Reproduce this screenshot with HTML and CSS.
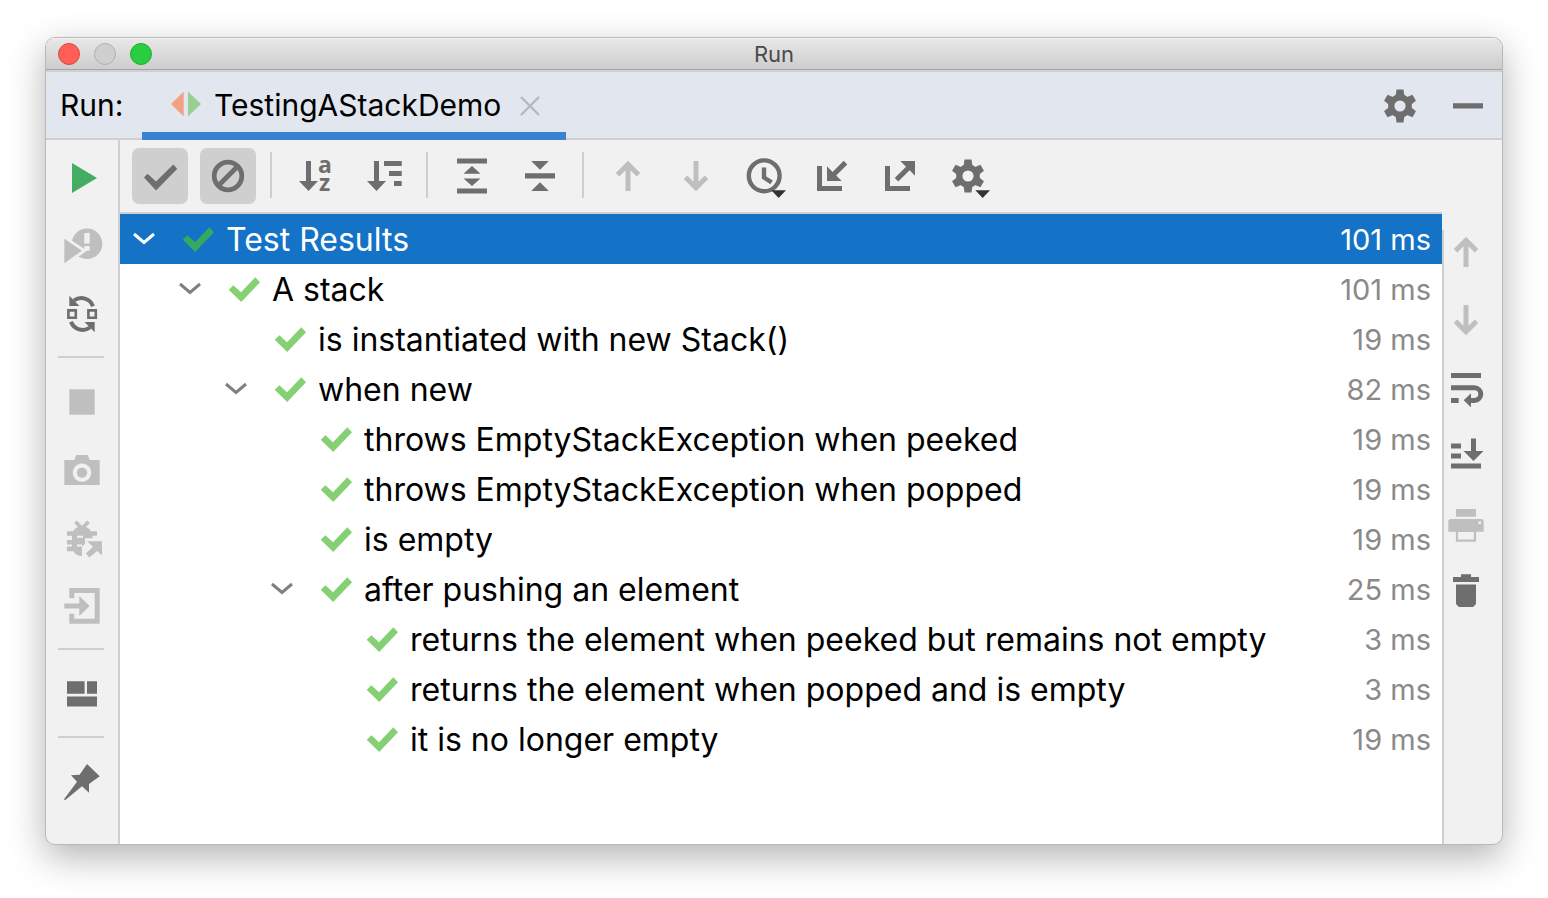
FILE: index.html
```html
<!DOCTYPE html>
<html lang="en">
<head>
<meta charset="utf-8">
<title>Run</title>
<link rel="stylesheet" href="styles.css">
</head>
<body>
<svg class="defs" aria-hidden="true">
  <symbol id="check" viewBox="0 0 32 26"><path d="M0.7 13.7 5.4 9.2 13 16.2 27.3 1.3 32 6.2 13.2 26Z"/></symbol>
  <symbol id="chevron" viewBox="0 0 24 24"><path d="M2 7 12 15.5 22 7" fill="none" stroke="currentColor" stroke-width="3"/></symbol>
  <symbol id="gear" viewBox="0 0 56 56">
    <circle cx="28" cy="28" r="8.7" fill="none" stroke="currentColor" stroke-width="6.2"/>
    <g id="teeth"><path d="M24.5 11.6h7l1 7h-9zM24.5 44.4h7l1-7h-9z"/></g>
    <use href="#teeth" transform="rotate(60 28 28)"/><use href="#teeth" transform="rotate(120 28 28)"/>
  </symbol>
  <symbol id="up" viewBox="0 0 56 56"><path d="M28 43V17M17.5 26.8 28 16.3 38.5 26.8" fill="none" stroke="currentColor" stroke-width="5"/></symbol>
  <symbol id="down" viewBox="0 0 56 56"><path d="M28 13V39M17.5 29.2 28 39.7 38.5 29.2" fill="none" stroke="currentColor" stroke-width="5"/></symbol>
</svg>
<main class="window">
  <header class="titlebar">
    <div class="lights">
      <button class="light close" aria-label="Close window"></button>
      <button class="light minimize" aria-label="Minimize window"></button>
      <button class="light maximize" aria-label="Maximize window"></button>
    </div>
    <h1 class="title">Run</h1>
  </header>

  <div class="tabs">
    <span class="tabs-label">Run:</span>
    <div class="tab">
      <svg class="tab-icon" viewBox="0 0 32 28"><path fill="#f2a184" d="M1 13 13.7 0.5v25z"/><path fill="#99cf93" d="M31 13 18 0.5v25z"/></svg>
      <span>TestingAStackDemo</span>
      <button class="tab-close" aria-label="Close tab"><svg viewBox="0 0 20 20"><path d="M1 1 19 19M19 1 1 19" fill="none" stroke="#b3b8c2" stroke-width="2.4"/></svg></button>
    </div>
    <div class="tabs-actions">
      <button class="tool" aria-label="Settings"><svg><use href="#gear"/></svg></button>
      <button class="tool" aria-label="Hide"><svg viewBox="0 0 56 56"><path d="M13 25.3h30v5.2H13z"/></svg></button>
    </div>
  </div>

  <div class="body">
    <nav class="sidebar" aria-label="Run actions">
      <button class="tool run" aria-label="Rerun"><svg viewBox="0 0 56 56"><path d="M18 13 43 28 18 43z"/></svg></button>
      <button class="tool off" aria-label="Rerun failed tests"><svg viewBox="0 0 56 56"><circle cx="33" cy="25.7" r="15.3"/><path d="M30.3 15h5.4v10.5h-5.4zM30.3 28h5.4v4.7h-5.4z" fill="#f1f1f1"/><path d="M8 16 33 32.7 8 50z" fill="#f1f1f1"/><path d="M10.3 20.7 28 32.7 10.3 45.3z"/></svg></button>
      <button class="tool" aria-label="Toggle auto-test"><svg viewBox="0 0 56 56"><path d="M14.4 24.4h7.4v7.4h-7.4zM34.4 24.4h7.4v7.4h-7.4z" fill="none" stroke="currentColor" stroke-width="2.6"/><g id="half"><path d="M39 20.2A12.4 12.4 0 0 0 20 14.5" fill="none" stroke="currentColor" stroke-width="4"/><path d="M15.3 9.7V20H25.5z"/></g><use href="#half" transform="rotate(180 28 28)"/></svg></button>
      <hr class="rule">
      <button class="tool off" aria-label="Stop"><svg viewBox="0 0 56 56"><path d="M15.3 15.3h25.4v25.4H15.3z"/></svg></button>
      <button class="tool off" aria-label="Dump threads"><svg viewBox="0 0 56 56"><path fill-rule="evenodd" d="M10.3 18H20.5L22.3 13H33.7L35.6 18H45.7V43H10.3zM28 21.4a9.2 9.2 0 1 0 0.01 0z"/><circle cx="28" cy="30.6" r="5.2"/></svg></button>
      <button class="tool off" aria-label="Attach debugger"><svg viewBox="0 0 56 56"><path d="M21.5 11.8 28 18.5 34.5 11.8" fill="none" stroke="currentColor" stroke-width="3.6"/><path d="M28 16.2c4.5 0 7.5 2 8.8 5H43v4.6h-4.5v2.4H31v5.5l-3 3V46c-4 0-7-1.8-8.6-4.8H13v-4.6h5v-2H13V30h5v-4.2h-5v-4.6h6.2c1.3-3 4.3-5 8.8-5z"/><path d="M23 25.8h6v2h-6zM23 34.5h5v2h-5z" fill="#f1f1f1"/><path d="M33 31.3H48V45.6L43.2 41 35.3 47.4 31.8 43.6 39 36.8z"/></svg></button>
      <button class="tool off" aria-label="Exit"><svg viewBox="0 0 56 56"><path d="M17.8 20.3V12.5H43.2V43.2H17.8V35.7" fill="none" stroke="currentColor" stroke-width="5"/><path d="M10.3 25.4h15V18L35.7 28 25.3 38v-7.5h-15z"/></svg></button>
      <hr class="rule">
      <button class="tool" aria-label="Restore layout"><svg viewBox="0 0 56 56"><path d="M13 15.2h17.6v12.6H13zM33 15.2h10v12.6H33zM13 30.4h30v10H13z"/></svg></button>
      <hr class="rule">
      <button class="tool" aria-label="Pin tab"><svg viewBox="0 0 56 56"><path d="M33 10 45.7 22.3 35 30V38.7L28 32.3 11 46.3 10 45.3 23 27.7 17 21.3 25.6 20.7z"/></svg></button>
    </nav>

    <div class="content">
      <div class="toolbar" role="toolbar" aria-label="Test actions">
        <button class="tool on" aria-pressed="true" aria-label="Show passed"><svg viewBox="0 0 56 56"><path d="M12 29.5 15.6 25.8 24 33.6 41.3 16.6 45.3 20.8 24 42.5z"/></svg></button>
        <button class="tool on" aria-pressed="true" aria-label="Show ignored"><svg viewBox="0 0 56 56"><g fill="none" stroke="currentColor" stroke-width="4.8"><circle cx="28" cy="28" r="13.8"/><path d="M18.5 37.5 37.5 18.5"/></g></svg></button>
        <span class="divider"></span>
        <button class="tool" aria-label="Sort alphabetically"><svg viewBox="0 0 56 56"><path d="M18 13h5v20h7L20.5 43 11 33h7z"/><text class="glyph" x="30" y="25">a</text><text class="glyph" x="31" y="43">z</text></svg></button>
        <button class="tool" aria-label="Sort by duration"><svg viewBox="0 0 56 56"><path d="M18 13h5v20h7L20.5 43 11 33h7zM28 13h17.7v5H28zM33 23h12.7v5H33zM38 33h7.7v5H38z"/></svg></button>
        <span class="divider"></span>
        <button class="tool" aria-label="Expand all"><svg viewBox="0 0 56 56"><path d="M13 10.4h30v5.2H13zM13 40.4h30v5.2H13zM28 18 36.5 25.7h-17zM28 38 36.5 30.5h-17z"/></svg></button>
        <button class="tool" aria-label="Collapse all"><svg viewBox="0 0 56 56"><path d="M13 25.3h30v5.3H13zM28 21.7 36.8 13H19.2zM28 34.3 36.8 43H19.2z"/></svg></button>
        <span class="divider"></span>
        <button class="tool off" aria-label="Previous failed test"><svg><use href="#up"/></svg></button>
        <button class="tool off" aria-label="Next failed test"><svg><use href="#down"/></svg></button>
        <button class="tool" aria-label="Test history"><svg viewBox="0 0 56 56"><g fill="none" stroke="currentColor" stroke-width="4.4"><circle cx="28.2" cy="27.8" r="15.4"/><path d="M28 19.5V29.5L35.6 34.3"/></g><path class="caret" d="M35.3 42.3H50L42.7 50z"/></svg></button>
        <button class="tool" aria-label="Import tests"><svg viewBox="0 0 56 56"><path d="M13 18h5v20h20v5H13zM23 18.3 28.6 24 39.7 12.8 43.3 16.4 32.2 27.5 37.7 33H23z"/></svg></button>
        <button class="tool" aria-label="Export results"><svg viewBox="0 0 56 56"><path d="M13 18h5v20h20v5H13zM28.3 13H43V27.7L37.6 22.3 26.3 33.6 22.7 30 34 18.7z"/></svg></button>
        <button class="tool" aria-label="Test options"><svg viewBox="0 0 56 56"><use href="#gear"/><path class="caret" d="M35.3 42.3H50L42.7 50z"/></svg></button>
      </div>

      <div class="results">
        <ul class="tree" role="tree" aria-label="Test results">
          <li class="row selected" role="treeitem"><button class="toggle" aria-label="Collapse"><svg><use href="#chevron"/></svg></button><svg class="status"><use href="#check"/></svg><span class="name">Test Results</span><span class="time">101 ms</span></li>
          <li class="row level-1" role="treeitem"><button class="toggle" aria-label="Collapse"><svg><use href="#chevron"/></svg></button><svg class="status"><use href="#check"/></svg><span class="name">A stack</span><span class="time">101 ms</span></li>
          <li class="row level-2" role="treeitem"><span class="toggle"></span><svg class="status"><use href="#check"/></svg><span class="name">is instantiated with new Stack()</span><span class="time">19 ms</span></li>
          <li class="row level-2" role="treeitem"><button class="toggle" aria-label="Collapse"><svg><use href="#chevron"/></svg></button><svg class="status"><use href="#check"/></svg><span class="name">when new</span><span class="time">82 ms</span></li>
          <li class="row level-3" role="treeitem"><span class="toggle"></span><svg class="status"><use href="#check"/></svg><span class="name">throws EmptyStackException when peeked</span><span class="time">19 ms</span></li>
          <li class="row level-3" role="treeitem"><span class="toggle"></span><svg class="status"><use href="#check"/></svg><span class="name">throws EmptyStackException when popped</span><span class="time">19 ms</span></li>
          <li class="row level-3" role="treeitem"><span class="toggle"></span><svg class="status"><use href="#check"/></svg><span class="name">is empty</span><span class="time">19 ms</span></li>
          <li class="row level-3" role="treeitem"><button class="toggle" aria-label="Collapse"><svg><use href="#chevron"/></svg></button><svg class="status"><use href="#check"/></svg><span class="name">after pushing an element</span><span class="time">25 ms</span></li>
          <li class="row level-4" role="treeitem"><span class="toggle"></span><svg class="status"><use href="#check"/></svg><span class="name">returns the element when peeked but remains not empty</span><span class="time">3 ms</span></li>
          <li class="row level-4" role="treeitem"><span class="toggle"></span><svg class="status"><use href="#check"/></svg><span class="name">returns the element when popped and is empty</span><span class="time">3 ms</span></li>
          <li class="row level-4" role="treeitem"><span class="toggle"></span><svg class="status"><use href="#check"/></svg><span class="name">it is no longer empty</span><span class="time">19 ms</span></li>
        </ul>
        <nav class="console-bar" aria-label="Console actions">
          <button class="tool small off" aria-label="Up the stack trace"><svg viewBox="6 6 44 44"><use href="#up" width="56" height="56"/></svg></button>
          <button class="tool small off" aria-label="Down the stack trace"><svg viewBox="6 6 44 44"><use href="#down" width="56" height="56"/></svg></button>
          <button class="tool small" aria-label="Soft-wrap"><svg viewBox="6 6 44 44"><path d="M13 13h30v5H13zM13 38h7.7v5H13zM25.7 40.3 33 33.3v14z"/><path d="M13 27.8H36.5a6.3 6.3 0 0 1 0 12.6H32" fill="none" stroke="currentColor" stroke-width="5"/></svg></button>
          <button class="tool small" aria-label="Scroll to the end"><svg viewBox="6 6 44 44"><path d="M13 15.5h10v5H13zM13 25.6h10v5H13zM13 35.5h30v5H13zM33 10.4h5V23h7.5L35.5 33 25.6 23H33z"/></svg></button>
          <button class="tool small off" aria-label="Print"><svg viewBox="6 6 44 44"><path fill-rule="evenodd" d="M18 13h20v7.7H18zM12 23h32l1.7 1.7V35.7H10.3V24.7zM40.3 25.4v2.7h2.7v-2.7z"/><path d="M19 35H37V44.7H19z" fill="#f1f1f1" stroke="currentColor" stroke-width="2.2"/></svg></button>
          <button class="tool small" aria-label="Clear all"><svg viewBox="6 6 44 44"><path d="M23 10.3h10V13h8v5H15v-5h8zM18 20.5h20V40l-3 3H21l-3-3z"/></svg></button>
        </nav>
      </div>
    </div>
  </div>
</main>
</body>
</html>
```
FILE: styles.css
```css
* {
  box-sizing: border-box;
}

body {
  margin: 0;
  min-height: 100vh;
  padding: 37px 45px 53px;
  display: flex;
  background: #fff;
  color: #000;
  font-family: Inter, "Liberation Sans", sans-serif;
  overflow: hidden;
}

button {
  margin: 0;
  padding: 0;
  border: 0;
  background: none;
  color: inherit;
  font: inherit;
}

svg {
  display: block;
  fill: currentColor;
}

.defs {
  position: absolute;
  width: 0;
  height: 0;
}

.window {
  flex: 1;
  min-width: 0;
  display: flex;
  flex-direction: column;
  border: 1px solid #b8b8b8;
  border-radius: 10px;
  background: #f1f1f1;
  box-shadow: 0 12px 36px rgba(0, 0, 0, 0.3);
  overflow: hidden;
}

.titlebar {
  display: grid;
  grid-template-columns: 1fr auto 1fr;
  align-items: center;
  height: 32px;
  padding: 0 12px;
  background: linear-gradient(#e8e8e8, #cdcdcd);
  box-shadow: inset 0 1px #f5f5f5;
  border-bottom: 1px solid #a6a6a6;
}

.lights {
  display: flex;
  gap: 14px;
}

.light {
  width: 22px;
  height: 22px;
  border: 1px solid #e0443e;
  border-radius: 50%;
  background: #ff5f57;
}

.minimize {
  border-color: #b0b0b0;
  background: #cfcfcf;
}

.maximize {
  border-color: #1dad2b;
  background: #28cd41;
}

.title {
  margin: 0;
  color: #4a4a4a;
  font-size: 22px;
  font-weight: 400;
  line-height: 28px;
}

.tabs {
  display: flex;
  height: 70px;
  padding: 0 6px 0 14px;
  border-top: 2px solid #d0d0d0;
  background: #e2e6ee;
  box-shadow: inset 0 -2px #cfcfcf;
  font-size: 30px;
  line-height: 66px;
}

.tabs-label {
  width: 82px;
}

.tab {
  display: flex;
  align-items: center;
  padding: 6px 26px 0 28px;
  border-bottom: 8px solid #3882d0;
}

.tab-icon {
  width: 32px;
  height: 28px;
  margin-right: 12px;
}

.tab-close {
  margin: 2px 0 0 19px;
}

.tab-close svg {
  width: 20px;
  height: 20px;
}

.tabs-actions {
  display: flex;
  gap: 12px;
  align-items: center;
  margin-left: auto;
}

.tool {
  flex: none;
  width: 56px;
  height: 56px;
  border-radius: 7px;
  color: #6e6e6e;
}

.tool svg {
  width: 100%;
  height: 100%;
}

.tool.on {
  background: #cfcfcf;
}

.tool.off {
  color: #bfbfbf;
}

.tool.run {
  color: #43ad63;
}

.tool.small {
  width: 44px;
  height: 44px;
}

.caret {
  fill: #333;
}

.glyph {
  font: 700 23px "Open Sans", sans-serif;
}

.body {
  flex: 1;
  display: flex;
  min-height: 0;
}

.sidebar {
  display: flex;
  flex-direction: column;
  align-items: center;
  gap: 12px;
  width: 74px;
  padding-top: 10px;
  border-right: 2px solid #cfcfcf;
}

.rule {
  width: 46px;
  height: 2px;
  margin: 2px 2px 4px 0;
  border: 0;
  background: #cfcfcf;
}

.content {
  flex: 1;
  min-width: 0;
  display: flex;
  flex-direction: column;
}

.toolbar {
  display: flex;
  gap: 12px;
  padding: 8px 12px;
}

.divider {
  width: 2px;
  height: 46px;
  margin: 4px 4px 0 2px;
  background: #cfcfcf;
}

.results {
  flex: 1;
  display: flex;
}

.tree {
  flex: 1;
  min-width: 0;
  margin: 0;
  padding: 0;
  border-top: 2px solid #cfcfcf;
  background: #fff;
  list-style: none;
}

.row {
  display: flex;
  align-items: center;
  height: 50px;
  padding: 0 11px 0 12px;
  color: #86d074;
}

.level-1 {
  padding-left: 58px;
}

.level-2 {
  padding-left: 104px;
}

.level-3 {
  padding-left: 150px;
}

.level-4 {
  padding-left: 196px;
}

.toggle {
  width: 24px;
  height: 24px;
  margin-right: 26px;
  color: #808080;
}

.toggle svg {
  width: 24px;
  height: 24px;
}

.status {
  width: 32px;
  height: 26px;
  margin-right: 12px;
}

.name {
  flex: 1;
  padding-top: 2px;
  color: #000;
  font-size: 32px;
  line-height: 48px;
  white-space: nowrap;
}

.time {
  color: #8a8a8a;
  font-size: 29px;
}

.selected {
  background: #1473c6;
  color: #36a861;
}

.selected .toggle,
.selected .name,
.selected .time {
  color: #fff;
}

.console-bar {
  display: flex;
  flex-direction: column;
  gap: 24px;
  width: 60px;
  margin-top: 18px;
  border-left: 2px solid #cfcfcf;
}
```
